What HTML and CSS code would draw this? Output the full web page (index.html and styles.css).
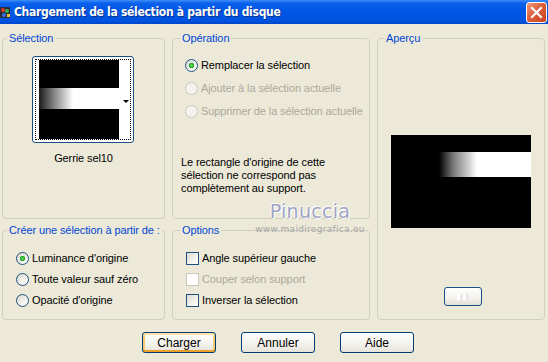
FILE: index.html
```html
<!DOCTYPE html>
<html lang="fr">
<head>
    <meta charset="UTF-8">
    <title>Chargement de la sélection à partir du disque</title>
    <link rel="stylesheet" href="styles.css">
</head>
<body>
    <div class="titlebar">
        <svg class="app-icon" width="11" height="13" viewBox="0 0 11 13">
            <rect x="0" y="1" width="10" height="11" rx="1" fill="#2b2b3a"/>
            <circle cx="3" cy="4" r="2" fill="#e03a2a"/>
            <circle cx="7" cy="5" r="2" fill="#36b34a"/>
            <circle cx="4" cy="9" r="2" fill="#3a6ee8"/>
            <rect x="7" y="8" width="3" height="3" fill="#f2c530"/>
        </svg>
        <span class="title">Chargement de la sélection à partir du disque</span>
        <button class="close-btn" type="button">
            <svg width="13" height="13" viewBox="0 0 13 13">
                <path d="M2 2 L11 11 M11 2 L2 11" stroke="#fff" stroke-width="2.2" stroke-linecap="square"/>
            </svg>
        </button>
    </div>

    <div class="dialog">
        <div class="groups">
            <fieldset class="group sel-group">
                <legend>Sélection</legend>
                <div class="sel-inner">
                    <div class="thumb-btn">
                        <div class="thumb-focus">
                            <div class="thumb-img"><div class="thumb-band"></div></div>
                            <div class="thumb-side"><span class="arrow"></span></div>
                        </div>
                    </div>
                    <div class="thumb-name">Gerrie sel10</div>
                </div>
            </fieldset>

            <fieldset class="group op-group">
                <legend>Opération</legend>
                <div class="op-inner">
                    <div class="choices">
                        <label class="choice"><input type="radio" class="xp-radio" name="op" checked> Remplacer la sélection</label>
                        <label class="choice disabled"><input type="radio" class="xp-radio" name="op" disabled> Ajouter à la sélection actuelle</label>
                        <label class="choice disabled"><input type="radio" class="xp-radio" name="op" disabled> Supprimer de la sélection actuelle</label>
                    </div>
                    <p class="info">Le rectangle d'origine de cette<br>sélection ne correspond pas<br>complètement au support.</p>
                </div>
            </fieldset>

            <fieldset class="group preview-group">
                <legend>Aperçu</legend>
                <div class="preview-inner">
                    <div class="preview-img"><div class="preview-band"></div></div>
                    <button class="small-btn" type="button"><span class="dots"></span></button>
                </div>
            </fieldset>

            <fieldset class="group source-group">
                <legend>Créer une sélection à partir de :</legend>
                <div class="choices small">
                    <label class="choice"><input type="radio" class="xp-radio" name="src" checked> Luminance d'origine</label>
                    <label class="choice"><input type="radio" class="xp-radio" name="src"> Toute valeur sauf zéro</label>
                    <label class="choice"><input type="radio" class="xp-radio" name="src"> Opacité d'origine</label>
                </div>
            </fieldset>

            <fieldset class="group opt-group">
                <legend>Options</legend>
                <div class="choices small opts">
                    <label class="choice"><input type="checkbox" class="xp-check"> Angle supérieur gauche</label>
                    <label class="choice disabled"><input type="checkbox" class="xp-check" disabled> Couper selon support</label>
                    <label class="choice"><input type="checkbox" class="xp-check"> Inverser la sélection</label>
                </div>
            </fieldset>
        </div>

        <div class="buttons">
            <button class="btn default" type="button">Charger</button>
            <button class="btn" type="button">Annuler</button>
            <button class="btn" type="button">Aide</button>
        </div>
    </div>

    <div class="watermark">
        <div class="wm-name">Pinuccia</div>
        <div class="wm-site">www.maidiregrafica.eu</div>
    </div>
</body>
</html>
```

FILE: styles.css
```css
* {
    box-sizing: border-box;
}

body {
    margin: 0;
    width: 548px;
    height: 362px;
    overflow: hidden;
    position: relative;
    background-color: #ece9d8;
    font-family: "Liberation Sans", Arial, sans-serif;
    font-size: 11px;
    letter-spacing: -0.1px;
    color: #000;
}

/* title bar */
.titlebar {
    height: 24px;
    display: flex;
    align-items: center;
    background: linear-gradient(#3d8ef8 0, #0c62ec 3px, #0058e8 40%, #0053e0 85%, #0047cc 100%);
    color: #fff;
}

.app-icon {
    margin-left: 0;
    flex: none;
}

.title {
    margin-left: 3px;
    font-family: "DejaVu Sans Condensed", "DejaVu Sans", sans-serif;
    font-weight: bold;
    font-size: 12px;
    letter-spacing: -0.3px;
    text-shadow: 1px 1px 0 #0a2f8c;
}

.close-btn {
    margin-left: auto;
    margin-right: 1px;
    width: 21px;
    height: 21px;
    padding: 0;
    border: 1px solid #fff;
    border-radius: 3px;
    background: linear-gradient(135deg, #ec9a7c 0, #de5f3b 45%, #c9431c 100%);
    display: flex;
    align-items: center;
    justify-content: center;
}

/* dialog body */
.dialog {
    padding: 8px 0 0 2px;
}

.groups {
    display: grid;
    grid-template-columns: 163px 198px 168px;
    grid-template-rows: 187px 96px;
    column-gap: 7px;
    row-gap: 5px;
}

.group {
    margin: 0;
    padding: 0;
    min-width: 0;
    border: 1px solid #d0d0bf;
    border-radius: 4px;
}

.group legend {
    margin-left: 4px;
    padding: 0 2px;
    line-height: 13px;
    white-space: nowrap;
    color: #0046d5;
}

.op-group legend,
.opt-group legend {
    margin-left: 7px;
}

.preview-group legend {
    margin-left: 6px;
}

.preview-group {
    grid-column: 3;
    grid-row: 1 / span 2;
}

/* selection thumbnail */
.sel-inner {
    padding-top: 11px;
    display: flex;
    flex-direction: column;
    align-items: center;
}

.thumb-btn {
    width: 102px;
    height: 87px;
    margin-right: 2px;
    padding: 2px;
    border: 1px solid #1c4f86;
    border-radius: 3px;
    background: #fff;
}

.thumb-focus {
    height: 100%;
    display: flex;
    padding-left: 3px;
    border: 1px dotted #000;
}

.thumb-img {
    width: 80px;
    height: 79px;
    padding-top: 28px;
    background: #000;
}

.thumb-band {
    height: 21px;
    background: linear-gradient(to right, #1c1c1c 0, #8a8a8a 16px, #fff 34px);
}

.thumb-side {
    flex: 1;
    display: flex;
    align-items: center;
    justify-content: flex-end;
    padding-right: 1px;
}

.arrow {
    width: 0;
    height: 0;
    border-left: 3px solid transparent;
    border-right: 3px solid transparent;
    border-top: 3px solid #000;
    margin-top: 3px;
}

.thumb-name {
    margin-top: 9px;
    line-height: 13px;
}

/* radio / checkbox rows */
.op-inner {
    padding: 12px 0 0 8px;
}

.choices {
    display: flex;
    flex-direction: column;
    gap: 7px;
    margin-left: 4px;
}

.choices.small {
    padding: 13px 0 0 13px;
    margin-left: 0;
    gap: 5px;
}

.choices.opts {
    padding-left: 13px;
}

.choice {
    display: flex;
    align-items: center;
    gap: 3px;
    height: 16px;
    white-space: nowrap;
}

.choice.disabled {
    color: #aca899;
}

.xp-radio {
    appearance: none;
    margin: 0;
    width: 13px;
    height: 13px;
    flex: none;
    border: 1px solid #1c5180;
    border-radius: 50%;
    background: linear-gradient(135deg, #d6d3c9 0, #f2f1ec 55%, #fff 100%);
}

.xp-radio:checked {
    background: radial-gradient(circle at 50% 50%, #6ee26a 0, #21a121 2.4px, transparent 3px),
                linear-gradient(135deg, #d6d3c9 0, #f2f1ec 55%, #fff 100%);
}

.xp-radio:disabled {
    border-color: #cac8bb;
    background: #f4f3ee;
}

.xp-check {
    appearance: none;
    margin: 0;
    width: 13px;
    height: 13px;
    flex: none;
    border: 1px solid #1c5180;
    background: linear-gradient(135deg, #dcd9cf 0, #f4f3ee 60%, #fff 100%);
}

.xp-check:disabled {
    border-color: #cac8bb;
    background: #fff;
}

.info {
    margin: 37px 0 0;
    line-height: 13px;
}

/* preview */
.preview-inner {
    padding-top: 90px;
    display: flex;
    flex-direction: column;
    align-items: center;
}

.preview-img {
    width: 140px;
    height: 93px;
    padding-top: 17px;
    background: #000;
}

.preview-band {
    height: 25px;
    margin-left: 48px;
    background: linear-gradient(to right, #000 0, #777 14px, #fff 38px);
}

.small-btn {
    margin-top: 59px;
    margin-left: 3px;
    width: 38px;
    height: 19px;
    padding: 0;
    border: 1px solid #1c4f86;
    border-radius: 3px;
    background: linear-gradient(#fff, #f3f2ec 60%, #e2e0d6);
    display: flex;
    align-items: center;
    justify-content: center;
}

.dots {
    width: 12px;
    height: 6px;
    background: repeating-linear-gradient(90deg, #fff 0 3px, #e8e8e8 3px 6px);
}

/* bottom buttons */
.buttons {
    display: flex;
    gap: 25px;
    margin: 12px 0 0 140px;
}

.btn {
    width: 74px;
    height: 21px;
    padding: 0;
    border: 1px solid #003c74;
    border-radius: 3px;
    background: linear-gradient(#fff 0, #f5f4ef 50%, #e6e3d9 100%);
    font: inherit;
    font-size: 12px;
    color: #000;
}

.btn.default {
    box-shadow: inset 0 -2px 0 #eea12a, inset 0 2px 0 #fde3a8, inset 2px 0 0 #f8cc6e, inset -2px 0 0 #f8cc6e;
}

/* watermark laid over the dialog */
.watermark {
    position: absolute;
    left: 248px;
    top: 200px;
    width: 124px;
    text-align: center;
    pointer-events: none;
}

.wm-name {
    font-family: "DejaVu Sans", sans-serif;
    font-size: 19px;
    line-height: 23px;
    letter-spacing: 0.3px;
    color: #9ea4c2;
    text-shadow: 1px 1px 0 #fff, -1px -1px 0 #fff;
}

.wm-site {
    margin-top: 1px;
    font-family: "DejaVu Sans", sans-serif;
    font-size: 9px;
    color: #a6a6a6;
    letter-spacing: 0.3px;
}
```
